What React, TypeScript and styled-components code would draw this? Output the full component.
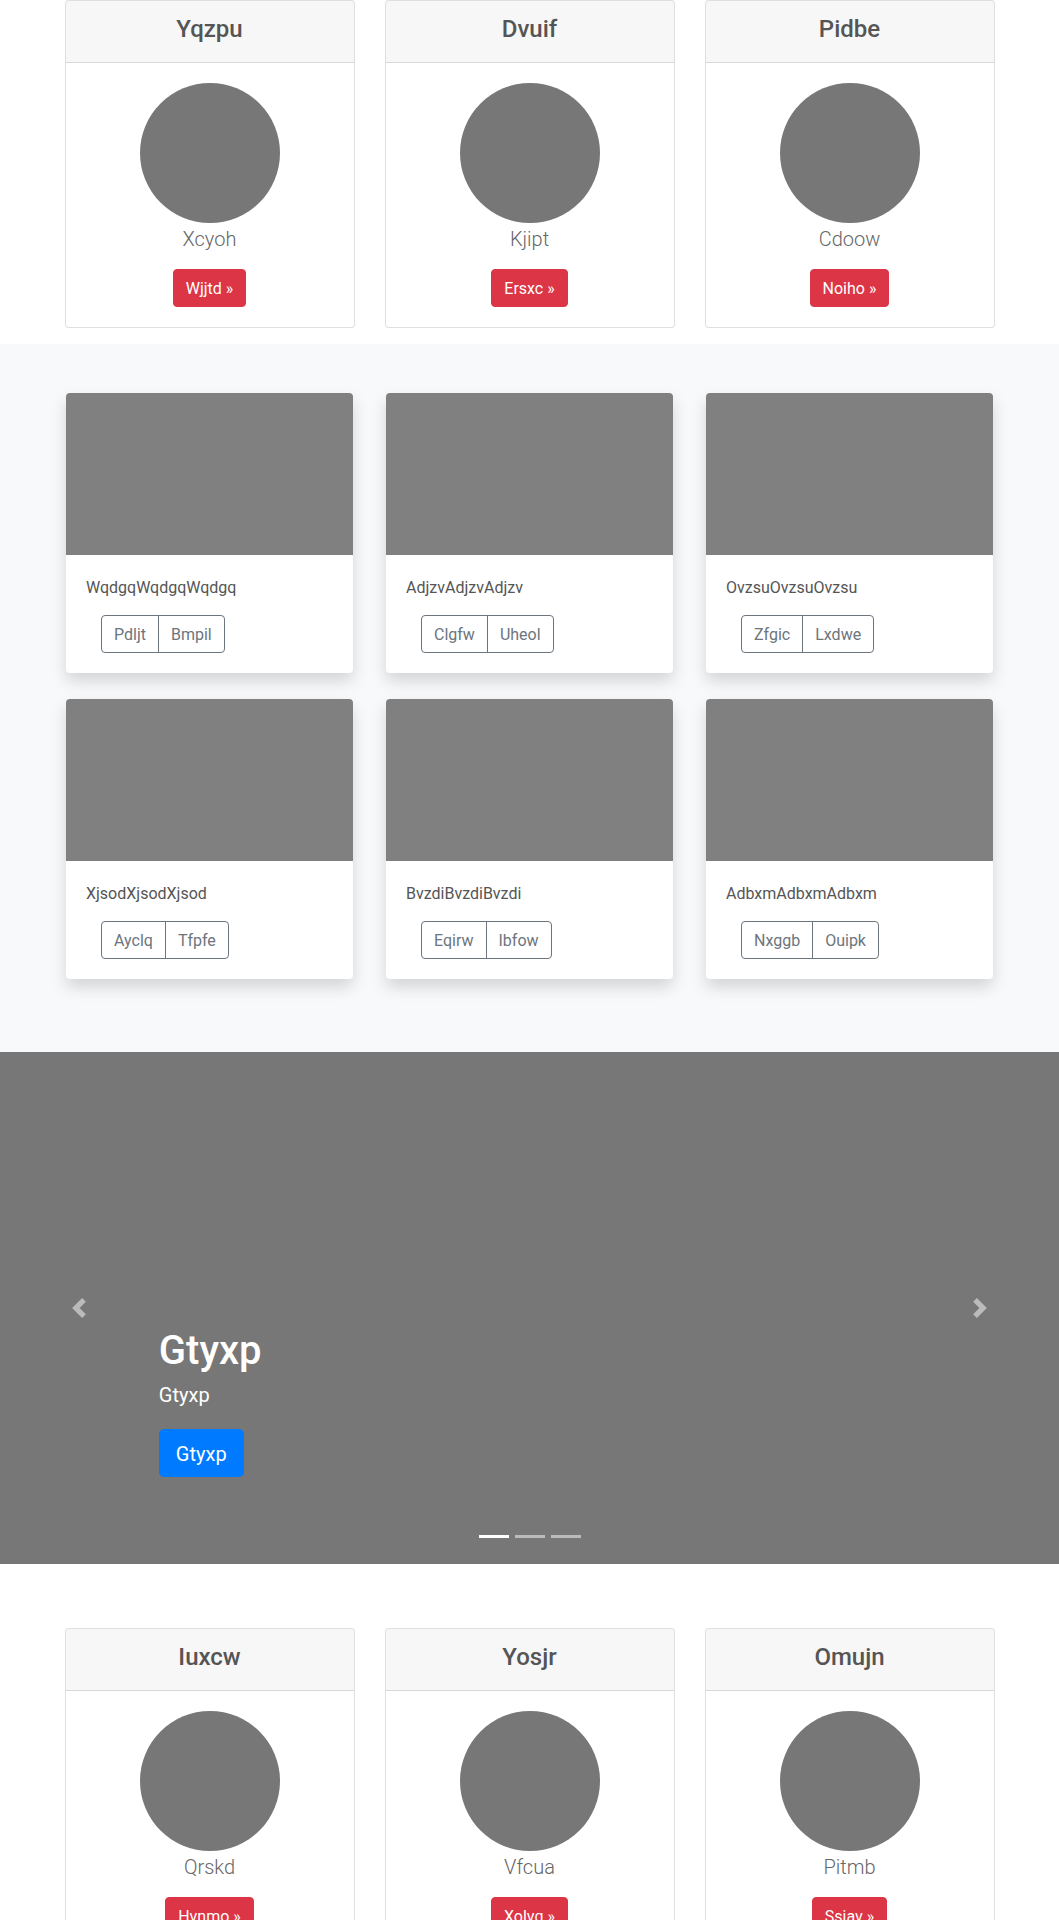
import React from "react";
import styled, { createGlobalStyle } from "styled-components";

const GlobalStyle = createGlobalStyle`
  *, *::before, *::after { box-sizing: border-box; }
  html, body { margin: 0; padding: 0; }
  body {
    font-family: "Segoe UI", Roboto, "Noto Sans", "Liberation Sans", Arial, sans-serif;
    font-size: 16px;
    line-height: 1.5;
    color: #212529;
    background: #fff;
  }
`;

const Container = styled.div`
  width: 960px;
  max-width: 100%;
  margin: 0 auto;
  padding: 0 15px;
`;

const Grid3 = styled.div<{ $rowGap?: number }>`
  display: grid;
  grid-template-columns: repeat(3, 1fr);
  column-gap: 30px;
  row-gap: ${(p) => p.$rowGap ?? 0}px;
`;

/* ---------- profile cards ---------- */
const ProfileCard = styled.div`
  background: #fff;
  border: 1px solid rgba(0, 0, 0, 0.125);
  border-radius: 4px;
  margin-bottom: 16px;
  text-align: center;
  overflow: hidden;
`;

const CardHeader = styled.div`
  padding: 12px 20px;
  background: rgba(0, 0, 0, 0.03);
  border-bottom: 1px solid rgba(0, 0, 0, 0.125);
`;

const CardTitle = styled.h4`
  margin: 0 0 6px;
  padding-top: 2px;
  font-size: 24px;
  font-weight: 500;
  line-height: 1.2;
  color: #555;
`;

const CardBody = styled.div`
  padding: 20px;
  display: flex;
  flex-direction: column;
  align-items: center;
`;

const Avatar = styled.div`
  width: 140px;
  height: 140px;
  border-radius: 50%;
  background: #777;
`;

const PersonName = styled.p`
  margin: 0 0 16px;
  padding-top: 1px;
  height: 30px;
  font-size: 20px;
  font-weight: 300;
  line-height: 30px;
  color: #666;
`;

const DangerButton = styled.a`
  display: inline-block;
  padding: 7px 12px 5px;
  font-size: 16px;
  line-height: 24px;
  color: #fff;
  background: #dc3545;
  border: 1px solid #dc3545;
  border-radius: 4px;
  text-decoration: none;
`;

/* ---------- album ---------- */
const AlbumSection = styled.section`
  background: #f8f9fa;
  padding: 49px 0 73px;
`;

const AlbumCard = styled.div`
  width: calc(100% - 3px);
  margin: 0 auto;
  background: #fff;
  border-radius: 4px;
  box-shadow: 0 0.5rem 1rem rgba(0, 0, 0, 0.15);
  overflow: hidden;
`;

const Thumb = styled.div`
  height: 162px;
  background: #808080;
`;

const AlbumBody = styled.div`
  padding: 20px;
`;

const AlbumText = styled.p`
  margin: 0 0 16px;
  padding-top: 1px;
  height: 24px;
  font-size: 16px;
  line-height: 24px;
  color: #555;
`;

const BtnGroup = styled.div`
  display: inline-flex;
  margin-left: 15px;
`;

const OutlineButton = styled.button`
  font-family: inherit;
  padding: 7px 12px 5px;
  font-size: 16px;
  line-height: 24px;
  color: #6c757d;
  background: transparent;
  border: 1px solid #6c757d;
  border-radius: 0;
  cursor: pointer;

  &:first-child {
    border-radius: 4px 0 0 4px;
  }
  &:last-child {
    margin-left: -1px;
    border-radius: 0 4px 4px 0;
  }
`;

/* ---------- carousel ---------- */
const Carousel = styled.section`
  position: relative;
  height: 512px;
  background: #777;
  margin-bottom: 64px;
  overflow: hidden;
`;

const Control = styled.a<{ $side: "left" | "right" }>`
  position: absolute;
  top: 0;
  bottom: 0;
  ${(p) => p.$side}: 0;
  width: 15%;
  display: flex;
  align-items: center;
  justify-content: center;
  opacity: 0.5;
  z-index: 2;
`;

const Caption = styled.div`
  position: absolute;
  left: 15%;
  right: 15%;
  bottom: 47px;
  padding: 20px 0;
  color: #fff;
  text-align: left;
  z-index: 1;
`;

const CaptionTitle = styled.h1`
  margin: 0 0 5.5px;
  padding-top: 1px;
  font-size: 40px;
  font-weight: 500;
  line-height: 48px;
`;

const CaptionText = styled.p`
  margin: 0 0 18.5px;
  font-size: 20px;
  line-height: 30px;
`;

const CaptionAction = styled.p`
  margin: 0 0 16px;
  padding-bottom: 4px;
  display: flex;
`;

const PrimaryLg = styled.a`
  display: inline-block;
  padding: 9px 16px 7px;
  font-size: 20px;
  line-height: 30px;
  color: #fff;
  background: #007bff;
  border: 1px solid #007bff;
  border-radius: 4.8px;
  text-decoration: none;
`;

const Indicators = styled.ol`
  position: absolute;
  left: 0;
  right: 0;
  bottom: 0;
  margin: 0 0 16px;
  padding: 0;
  list-style: none;
  display: flex;
  justify-content: center;
  z-index: 3;
`;

const Indicator = styled.li<{ $active?: boolean }>`
  box-sizing: content-box;
  width: 30px;
  height: 3px;
  margin: 0 3px;
  background: #fff;
  background-clip: padding-box;
  border-top: 10px solid transparent;
  border-bottom: 10px solid transparent;
  opacity: ${(p) => (p.$active ? 1 : 0.5)};
`;

/* ---------- data ---------- */
type Profile = { title: string; name: string; action: string };

const topProfiles: Profile[] = [
  { title: "Yqzpu", name: "Xcyoh", action: "Wjjtd" },
  { title: "Dvuif", name: "Kjipt", action: "Ersxc" },
  { title: "Pidbe", name: "Cdoow", action: "Noiho" },
];

const bottomProfiles: Profile[] = [
  { title: "Iuxcw", name: "Qrskd", action: "Hvnmo" },
  { title: "Yosjr", name: "Vfcua", action: "Xolvq" },
  { title: "Omujn", name: "Pitmb", action: "Ssjav" },
];

const albums = [
  { text: "WqdgqWqdgqWqdgq", a: "Pdljt", b: "Bmpil" },
  { text: "AdjzvAdjzvAdjzv", a: "Clgfw", b: "Uheol" },
  { text: "OvzsuOvzsuOvzsu", a: "Zfgic", b: "Lxdwe" },
  { text: "XjsodXjsodXjsod", a: "Ayclq", b: "Tfpfe" },
  { text: "BvzdiBvzdiBvzdi", a: "Eqirw", b: "Ibfow" },
  { text: "AdbxmAdbxmAdbxm", a: "Nxggb", b: "Ouipk" },
];

const ProfileRow: React.FC<{ items: Profile[] }> = ({ items }) => (
  <Container>
    <Grid3>
      {items.map((p) => (
        <ProfileCard key={p.title}>
          <CardHeader>
            <CardTitle>{p.title}</CardTitle>
          </CardHeader>
          <CardBody>
            <Avatar />
            <PersonName>{p.name}</PersonName>
            <DangerButton href="#">{p.action} &raquo;</DangerButton>
          </CardBody>
        </ProfileCard>
      ))}
    </Grid3>
  </Container>
);

const PrevIcon = () => (
  <svg width="20" height="20" viewBox="0 0 8 8" fill="#fff">
    <path d="M5.25 0l-4 4 4 4 1.5-1.5L4.25 4l2.5-2.5L5.25 0z" />
  </svg>
);

const NextIcon = () => (
  <svg width="20" height="20" viewBox="0 0 8 8" fill="#fff">
    <path d="M2.75 0l-1.5 1.5L3.75 4l-2.5 2.5L2.75 8l4-4-4-4z" />
  </svg>
);

export default function App() {
  return (
    <>
      <GlobalStyle />
      <ProfileRow items={topProfiles} />

      <AlbumSection>
        <Container>
          <Grid3 $rowGap={26}>
            {albums.map((al) => (
              <AlbumCard key={al.text}>
                <Thumb />
                <AlbumBody>
                  <AlbumText>{al.text}</AlbumText>
                  <BtnGroup>
                    <OutlineButton type="button">{al.a}</OutlineButton>
                    <OutlineButton type="button">{al.b}</OutlineButton>
                  </BtnGroup>
                </AlbumBody>
              </AlbumCard>
            ))}
          </Grid3>
        </Container>
      </AlbumSection>

      <Carousel>
        <Indicators>
          <Indicator $active />
          <Indicator />
          <Indicator />
        </Indicators>
        <Caption>
          <CaptionTitle>Gtyxp</CaptionTitle>
          <CaptionText>Gtyxp</CaptionText>
          <CaptionAction>
            <PrimaryLg href="#">Gtyxp</PrimaryLg>
          </CaptionAction>
        </Caption>
        <Control $side="left" href="#">
          <PrevIcon />
        </Control>
        <Control $side="right" href="#">
          <NextIcon />
        </Control>
      </Carousel>

      <ProfileRow items={bottomProfiles} />
    </>
  );
}
